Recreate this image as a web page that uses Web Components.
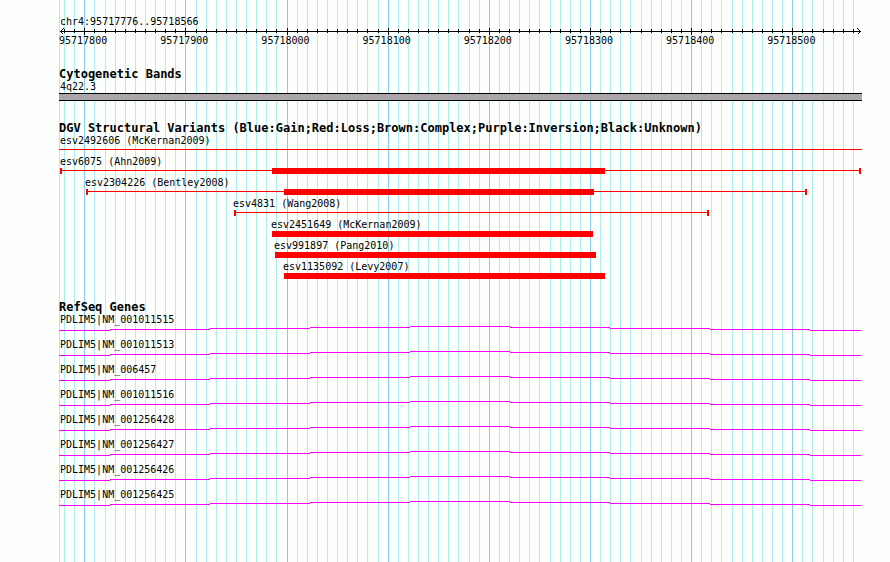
<!DOCTYPE html>
<html lang="en">
<head>
<meta charset="utf-8">
<title>chr4:95717776..95718566</title>
<style>
body {
    margin: 0;
    background: #fdfffc;
    color: #000;
    font-family: "DejaVu Sans Mono", "Liberation Mono", monospace;
    font-size: 10px;
    line-height: 12px;
}
</style>
</head>
<body>
<genome-browser>
    <genome-ruler region="chr4:95717776..95718566"></genome-ruler>
    <genome-track name="Cytogenetic Bands">
        <cyto-band>4q22.3</cyto-band>
    </genome-track>
    <genome-track name="DGV Structural Variants (Blue:Gain;Red:Loss;Brown:Complex;Purple:Inversion;Black:Unknown)">
        <variant-row line="0 803">esv2492606 (McKernan2009)</variant-row>
        <variant-row line="1 802" caps bar="213 546" label="1">esv6075 (Ahn2009)</variant-row>
        <variant-row line="27 748" caps bar="225 535" label="26">esv2304226 (Bentley2008)</variant-row>
        <variant-row line="175 650" caps label="174">esv4831 (Wang2008)</variant-row>
        <variant-row bar="213 534" label="212">esv2451649 (McKernan2009)</variant-row>
        <variant-row bar="216 537" label="215">esv991897 (Pang2010)</variant-row>
        <variant-row bar="225 546" label="224">esv1135092 (Levy2007)</variant-row>
    </genome-track>
    <genome-track name="RefSeq Genes">
        <gene-row>PDLIM5|NM_001011515</gene-row>
        <gene-row>PDLIM5|NM_001011513</gene-row>
        <gene-row>PDLIM5|NM_006457</gene-row>
        <gene-row>PDLIM5|NM_001011516</gene-row>
        <gene-row>PDLIM5|NM_001256428</gene-row>
        <gene-row>PDLIM5|NM_001256427</gene-row>
        <gene-row>PDLIM5|NM_001256426</gene-row>
        <gene-row>PDLIM5|NM_001256425</gene-row>
    </genome-track>
</genome-browser>

<script>
// drawing units across the panel
const WIDTH = 803;
const START = 95717776;
const END = 95718566;

function toX(bp) {
    return Math.round(1 + (bp - START) * 800 / (END - START + 1));
}

// every 10 bp, with a major one every 100 bp
function ticks() {
    const list = [];
    for (let bp = Math.ceil(START / 10) * 10; bp <= END - 6; bp += 10) {
        list.push({ bp: bp, x: toX(bp), major: bp % 100 === 0 });
    }
    return list;
}

function rect(x, y, w, h, fill) {
    return `<rect x="${x}" y="${y}" width="${w}" height="${h}" fill="${fill}"/>`;
}

function svg(height, content) {
    return `<svg viewBox="0 0 ${WIDTH} ${height}" height="${height}" preserveAspectRatio="none" shape-rendering="crispEdges" aria-hidden="true">${content}</svg>`;
}

const shared = `
:host {
    display: block;
}
svg {
    display: block;
    width: 100%;
}
.label {
    white-space: nowrap;
}
`;

class GenomeBrowser extends HTMLElement {
    constructor() {
        super();
        const lines = ticks().map((t) => rect(t.x, 0, 1, 10, t.major ? '#87ceeb' : '#afeeee')).join('');
        this.attachShadow({ mode: 'open' }).innerHTML = `
<style>
${shared}
:host {
    position: relative;
    box-sizing: border-box;
    min-height: 100vh;
    margin: 0 28px 0 59px;
    padding-top: 16px;
}
.grid {
    position: absolute;
    inset: 0;
}
.grid svg {
    height: 100%;
}
.tracks {
    position: relative;
    display: flex;
    flex-direction: column;
}
</style>
<div class="grid">${svg(10, rect(0, 0, 1, 10, '#afeeee') + lines)}</div>
<div class="tracks"><slot></slot></div>
`;
    }
}

class GenomeRuler extends HTMLElement {
    constructor() {
        super();
        const all = ticks();
        const marks = all.map((t) => t.major ? rect(t.x, 1, 1, 7, '#000') : rect(t.x, 2, 1, 4, '#000')).join('');
        const numbers = all.filter((t) => t.major).map((t) => `<span>${t.bp}</span>`).join('');
        const arrows = '<path d="M4.5 1.5L1.5 4.5L4.5 7.5M798.5 1.5L801.5 4.5L798.5 7.5" fill="none" stroke="#000"/>';
        this.attachShadow({ mode: 'open' }).innerHTML = `
<style>
${shared}
:host {
    padding-bottom: 21px;
}
.label {
    padding-left: 1px;
    height: 11px;
}
.numbers {
    display: grid;
    grid-template-columns: repeat(8, 1fr);
    margin: 0 2.5% 0 -3.3%;
    text-align: center;
}
</style>
<div class="label">${this.getAttribute('region')}</div>
${svg(8, rect(1, 4, 801, 1, '#000') + marks + arrows)}
<div class="numbers">${numbers}</div>
`;
    }
}

class GenomeTrack extends HTMLElement {
    constructor() {
        super();
        this.attachShadow({ mode: 'open' }).innerHTML = `
<style>
${shared}
:host {
    padding-bottom: 21px;
}
h2 {
    margin: 0 0 1px;
    font-size: 12px;
    line-height: 12px;
    white-space: nowrap;
}
</style>
<h2>${this.getAttribute('name')}</h2>
<slot></slot>
`;
    }
}

class CytoBand extends HTMLElement {
    constructor() {
        super();
        this.attachShadow({ mode: 'open' }).innerHTML = `
<style>
${shared}
.label {
    padding-left: 1px;
}
.band {
    height: 6px;
    border: solid #000;
    border-width: 1px 0;
    background: #aaa6aa;
}
</style>
<div class="label"><slot></slot></div>
<div class="band"></div>
`;
    }
}

class VariantRow extends HTMLElement {
    constructor() {
        super();
        const line = this.range('line');
        const bar = this.range('bar');
        let glyph = '';
        if (line) {
            glyph += rect(line[0], 4, line[1] - line[0], 1, '#f00');
            if (this.hasAttribute('caps')) {
                glyph += rect(line[0], 2, 2, 6, '#f00') + rect(line[1] - 2, 2, 2, 6, '#f00');
            }
        }
        if (bar) {
            glyph += rect(bar[0], 2, bar[1] - bar[0], 6, '#f00');
        }
        const left = Number(this.getAttribute('label') || 1) / WIDTH * 100;
        this.attachShadow({ mode: 'open' }).innerHTML = `
<style>
${shared}
:host {
    padding-bottom: 2px;
}
:host(:last-of-type) {
    padding-bottom: 0;
}
.label {
    height: 10px;
    margin-left: ${left}%;
}
</style>
<div class="label"><slot></slot></div>
${svg(9, glyph)}
`;
    }

    range(name) {
        const value = this.getAttribute(name);
        return value ? value.split(' ').map(Number) : null;
    }
}

class GeneRow extends HTMLElement {
    constructor() {
        super();
        // the intron is a very shallow hat, one unit up per step
        const stops = [0, 51, 151, 251, 351, 451, 551, 651, 751, 802];
        let glyph = '';
        for (let i = 0; i < stops.length - 1; i++) {
            glyph += rect(stops[i], 4 + Math.abs(4 - i), stops[i + 1] - stops[i], 1, '#f0f');
        }
        this.attachShadow({ mode: 'open' }).innerHTML = `
<style>
${shared}
:host {
    padding-bottom: 5px;
}
.label {
    padding-left: 1px;
    height: 8px;
}
</style>
<div class="label"><slot></slot></div>
${svg(12, glyph)}
`;
    }
}

customElements.define('genome-browser', GenomeBrowser);
customElements.define('genome-ruler', GenomeRuler);
customElements.define('genome-track', GenomeTrack);
customElements.define('cyto-band', CytoBand);
customElements.define('variant-row', VariantRow);
customElements.define('gene-row', GeneRow);
</script>
</body>
</html>
